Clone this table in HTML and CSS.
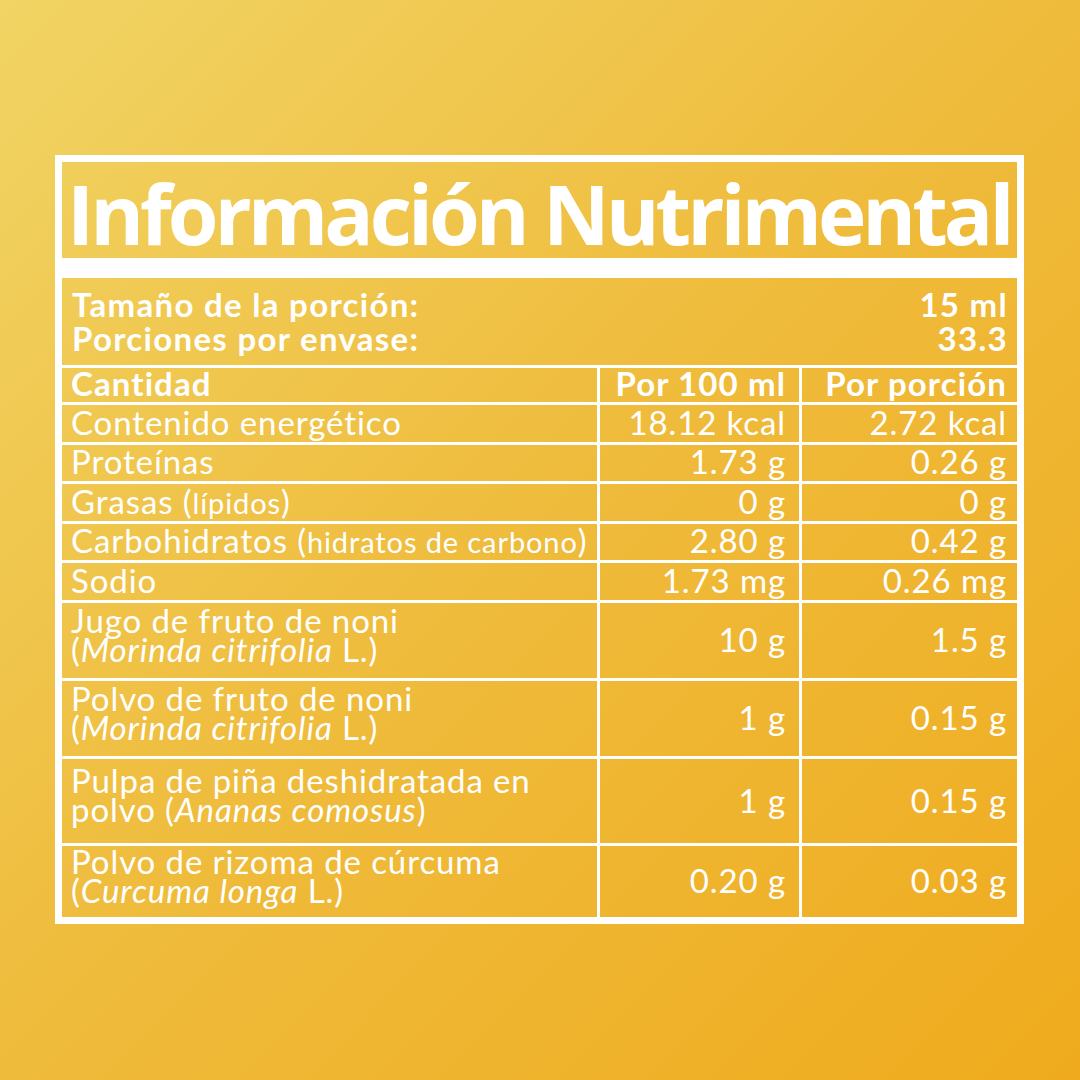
FILE: index.html
```html
<!DOCTYPE html>
<html lang="es">
<head>
<meta charset="utf-8">
<title>Información Nutrimental</title>
<link rel="stylesheet" href="styles.css">
</head>
<body>
<main class="page">
  <section class="frame">
    <h1 class="title fill">Información Nutrimental</h1>
    <table class="facts">
      <colgroup><col class="c1"><col class="c2"><col class="c3"></colgroup>
      <tr class="info">
        <td colspan="3" class="fill info-cell">
          <div class="info-grid">
            <span>Tamaño de la porción:</span><span class="r">15 ml</span>
            <span>Porciones por envase:</span><span class="r">33.3</span>
          </div>
        </td>
      </tr>
      <tr class="head">
        <th class="fill name">Cantidad</th><th class="fill val v2">Por 100 ml</th><th class="fill val v3">Por porción</th>
      </tr>
      <tr class="single h37">
        <td class="fill name">Contenido energético</td><td class="fill val v2">18.12 kcal</td><td class="fill val v3">2.72 kcal</td>
      </tr>
      <tr class="single h36">
        <td class="fill name">Proteínas</td><td class="fill val v2">1.73 g</td><td class="fill val v3">0.26 g</td>
      </tr>
      <tr class="single h37">
        <td class="fill name">Grasas (<span class="small">lípidos</span>)</td><td class="fill val v2">0 g</td><td class="fill val v3">0 g</td>
      </tr>
      <tr class="single h36">
        <td class="fill name">Carbohidratos (<span class="small">hidratos de carbono</span>)</td><td class="fill val v2">2.80 g</td><td class="fill val v3">0.42 g</td>
      </tr>
      <tr class="single h37">
        <td class="fill name">Sodio</td><td class="fill val v2">1.73 mg</td><td class="fill val v3">0.26 mg</td>
      </tr>
      <tr class="multi r-jugo">
        <td class="fill name">Jugo de fruto de noni<br>(<i>Morinda citrifolia</i> L.)</td><td class="fill val v2">10 g</td><td class="fill val v3">1.5 g</td>
      </tr>
      <tr class="multi r-polvo">
        <td class="fill name">Polvo de fruto de noni<br>(<i>Morinda citrifolia</i> L.)</td><td class="fill val v2">1 g</td><td class="fill val v3">0.15 g</td>
      </tr>
      <tr class="multi r-pulpa">
        <td class="fill name">Pulpa de piña deshidratada en<br>polvo (<i>Ananas comosus</i>)</td><td class="fill val v2">1 g</td><td class="fill val v3">0.15 g</td>
      </tr>
      <tr class="multi r-curcuma">
        <td class="fill name">Polvo de rizoma de cúrcuma<br>(<i>Curcuma longa</i> L.)</td><td class="fill val v2">0.20 g</td><td class="fill val v3">0.03 g</td>
      </tr>
    </table>
  </section>
</main>
</body>
</html>
```

FILE: styles.css
```css
html, body {
  margin: 0;
  padding: 0;
}

body {
  width: 1080px;
  height: 1080px;
  overflow: hidden;
  background: linear-gradient(135deg, #f1d464 0%, #efbb3b 50%, #efab1d 100%);
  color: #ffffff;
  font-family: Lato, "Open Sans", sans-serif;
}

.fill {
  background: linear-gradient(135deg, #f1d464 0%, #efbb3b 50%, #efab1d 100%) fixed;
}

.page {
  padding: 155px 0 0 55px;
}

.frame {
  width: 955px;
  padding: 7px;
  background: #ffffff;
}

.title {
  margin: 0;
  height: 93px;
  padding: 3px 0 0 5px;
  font-family: "Open Sans", "Noto Sans", sans-serif;
  font-weight: 700;
  font-size: 82px;
  line-height: 96px;
  letter-spacing: -4px;
  white-space: nowrap;
}

.facts {
  margin: 17px -3px -3px -3px;
  width: calc(100% + 6px);
  border-collapse: separate;
  border-spacing: 3px;
  table-layout: fixed;
  font-size: 33px;
  letter-spacing: 0.9px;
}

.c1 { width: 535px; }
.c2 { width: 199px; }
.c3 { width: 215px; }

.facts td, .facts th {
  padding: 0;
  font-weight: 400;
  text-align: left;
  white-space: nowrap;
}

.info { height: 87px; }
.head { height: 34px; }
.h37 { height: 37px; }
.h36 { height: 36px; }
.r-jugo { height: 75px; }
.r-polvo { height: 75px; }
.r-pulpa { height: 84px; }
.r-curcuma { height: 71px; }

.facts .info-cell {
  vertical-align: top;
  padding: 9px 10px 0 10px;
}

.info-grid {
  display: grid;
  grid-template-columns: 1fr auto;
  font-weight: 700;
  line-height: 34px;
  letter-spacing: 1.3px;
}

.r { text-align: right; margin-right: -1px; }

.head th, .single td {
  vertical-align: bottom;
  line-height: 33px;
}

.facts .head th {
  line-height: 31px;
  padding-bottom: 3px;
  font-weight: 700;
  letter-spacing: 1.1px;
}

.facts .single td { padding-bottom: 3px; }

.multi td {
  vertical-align: middle;
  line-height: 33px;
}

.facts .multi .name {
  line-height: 29px;
  padding-bottom: 12px;
}

.facts .multi .val { padding-bottom: 2px; }

.facts .name { padding-left: 9px; }
.facts .val { text-align: right; }
.facts .v2 { padding-right: 13px; }
.facts .v3 { padding-right: 10px; }

.small {
  font-size: 29px;
  line-height: 1;
}
```
